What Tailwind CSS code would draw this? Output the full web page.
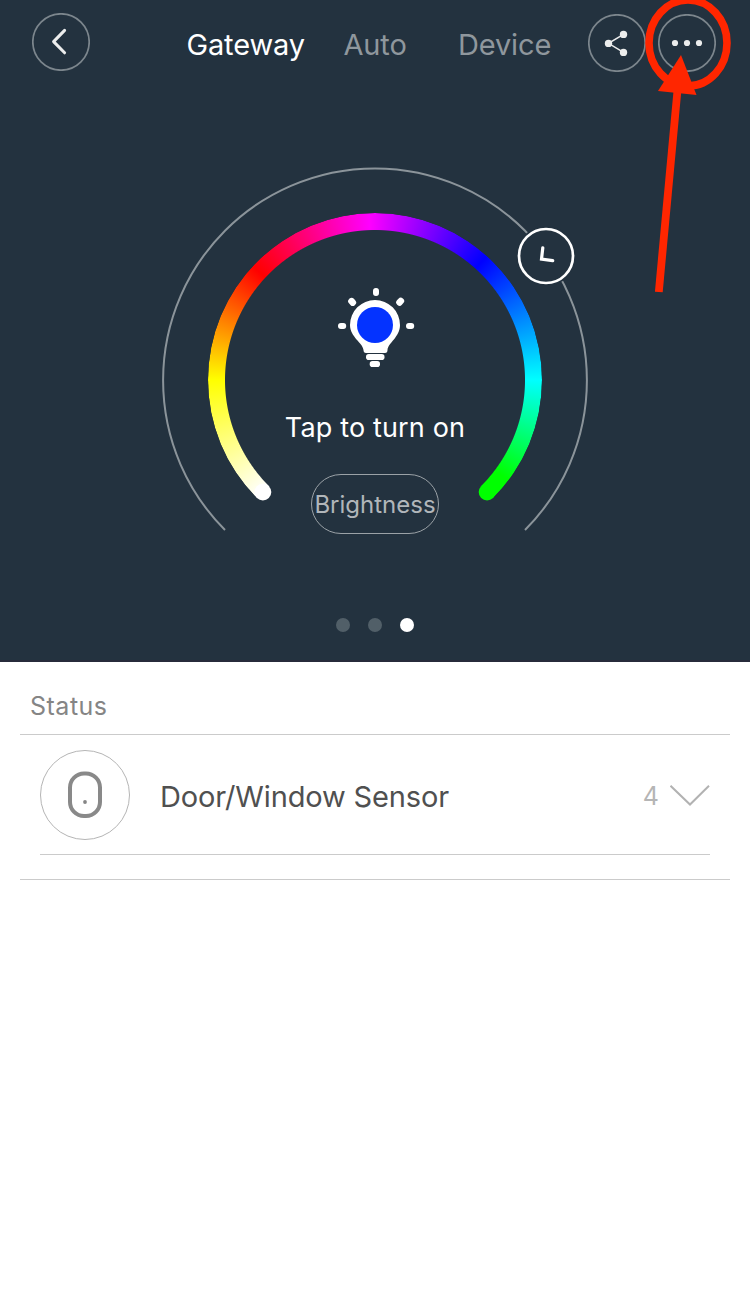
<!DOCTYPE html>
<html lang="en">
<head>
<meta charset="utf-8">
<title>Gateway</title>
<script src="https://cdn.jsdelivr.net/npm/@tailwindcss/browser@4"></script>
</head>
<body class="bg-white font-['Inter',sans-serif]">
<main class="relative flex h-[1294px] w-[750px] flex-col overflow-hidden bg-white">
  <section class="flex h-[662px] flex-col items-center border-b-2 border-[#272b3b] bg-[#23323f]">
    <header class="flex w-full items-start pt-[13px] pl-8">
      <button class="size-[58px] shrink-0" aria-label="Back">
        <svg class="block size-[58px]" viewBox="0 0 58 58" fill="none">
          <circle cx="29" cy="29" r="28.2" stroke="#7c868d" stroke-width="1.7"/>
          <path d="M32.6 17.4 21.6 28.6 32.6 39.8" stroke="#eceded" stroke-width="3" stroke-linecap="round" stroke-linejoin="round"/>
        </svg>
      </button>
      <nav class="flex pt-3 text-[29px] leading-10 tracking-[-0.150px] text-[#8f979d]">
        <a class="ml-[96.500px] w-[118px] whitespace-nowrap text-white">Gateway</a>
        <a class="ml-[39px] w-[64px] whitespace-nowrap">Auto</a>
        <a class="ml-[50.500px] w-[93px] whitespace-nowrap">Device</a>
      </nav>
      <button class="mt-px ml-[37px] size-[58px] shrink-0" aria-label="Share">
        <svg class="block size-[58px]" viewBox="0 0 58 58" fill="none">
          <circle cx="29" cy="29" r="28.2" stroke="#7c868d" stroke-width="1.7"/>
          <path d="M35.5 20.4 20.5 29.3 35.5 38.4" stroke="#eceded" stroke-width="1.5"/>
          <g fill="#eceded"><circle cx="35.5" cy="20.4" r="3.7"/><circle cx="20.5" cy="29.4" r="3.7"/><circle cx="35.5" cy="38.4" r="3.7"/></g>
        </svg>
      </button>
      <button class="mt-px ml-3 size-[58px] shrink-0" aria-label="More">
        <svg class="block size-[58px]" viewBox="0 0 58 58" fill="none">
          <circle cx="29" cy="29" r="28.2" stroke="#7c868d" stroke-width="1.7"/>
          <g fill="#eceded"><circle cx="17" cy="29" r="3.1"/><circle cx="29" cy="29" r="3.1"/><circle cx="41" cy="29" r="3.1"/></g>
        </svg>
      </button>
    </header>

    <div class="relative mt-[88px] flex h-[400px] w-[450px] flex-col items-center">
      <!-- colour ring -->
      <div class="absolute top-[53px] left-[58px] size-[334px] rounded-full bg-[conic-gradient(from_225deg,#fff_0deg,#ff0_45deg,#f00_88deg,#f0f_133deg,#00f_177deg,#0ff_225deg,#0f0_262deg,#0f0_270deg,transparent_270deg)] [mask-image:radial-gradient(circle,transparent_149.5px,#000_150.5px)]"></div>
      <svg class="absolute top-0 left-0 h-[400px] w-[450px]" viewBox="150 160 450 400" fill="none">
        <circle cx="262.900" cy="492.100" r="8.400" fill="#fff"/>
        <circle cx="487.100" cy="492.100" r="8.400" fill="#0f0"/>
        <path d="M225 530A211.900 211.900 0 1 1 525 530" stroke="#8b949a" stroke-width="2"/>
        <circle cx="546" cy="256" r="30" fill="#23323f"/>
        <circle cx="546" cy="256" r="27" stroke="#fff" stroke-width="2.700"/>
        <path d="M542.800 247.800 541.500 259.200 552.700 260.700" stroke="#fff" stroke-width="3.200" stroke-linecap="round"/>
      </svg>
      <svg class="relative mt-[120px] h-[100px] w-[110px] shrink-0" viewBox="320 280 110 100" fill="#fff">
        <path d="M350 325A25 25 0 0 1 400 325C400 337 388 343 387.500 350Q387.500 353 385 353H366Q363.500 353 363.500 350C363 343 350 337 350 325Z"/>
        <circle cx="375" cy="325" r="18" fill="#0433ff"/>
        <rect x="366" y="354" width="18.500" height="6" rx="2.800"/>
        <rect x="369.700" y="361" width="10.300" height="6" rx="2.800"/>
        <rect x="373" y="288" width="6" height="8" rx="2.900"/>
        <rect x="338" y="323" width="8.200" height="6" rx="2.900"/>
        <rect x="406" y="323" width="8.200" height="6" rx="2.900"/>
        <rect x="348" y="298.500" width="8.400" height="6.600" rx="3.100" transform="rotate(48 352.1 301.8)"/>
        <rect x="396" y="298.500" width="8.400" height="6.600" rx="3.100" transform="rotate(-48 400.1 301.8)"/>
      </svg>
      <p class="relative mt-[28px] text-[27px] leading-10 tracking-[0.150px] whitespace-nowrap text-white">Tap to turn on</p>
      <button class="relative mt-[26px] flex h-[60px] w-32 shrink-0 items-center justify-center rounded-full border border-[#9ba2a7] pt-0.5 text-[24px] whitespace-nowrap text-[#b1b6ba]">Brightness</button>
    </div>

    <div class="mt-[58px] flex gap-[18px]">
      <span class="size-3.5 rounded-full bg-[#515f68]"></span>
      <span class="size-3.5 rounded-full bg-[#515f68]"></span>
      <span class="size-3.5 rounded-full bg-white"></span>
    </div>
  </section>

  <section class="mx-5 h-[218px] border-b border-[#cbcbcb]">
    <h2 class="h-[73px] border-b border-[#cbcbcb] pt-6 pl-2.5 text-[25px] leading-10 tracking-[0.500px] text-[#858585]">Status</h2>
    <div class="mx-5 flex h-[120px] items-center border-b border-[#cbcbcb]">
      <svg class="size-[90px] shrink-0" viewBox="0 0 90 90" fill="none">
        <circle cx="45" cy="45" r="44.500" stroke="#b5b5b5"/>
        <rect x="30" y="23.500" width="30" height="42.500" rx="14" stroke="#898989" stroke-width="4"/>
        <circle cx="45" cy="52" r="1.900" fill="#858585"/>
      </svg>
      <span class="ml-[30px] pt-1 text-[29px] tracking-[-0.150px] whitespace-nowrap text-[#505050]">Door/Window Sensor</span>
      <span class="ml-auto pt-1 text-[25px] text-[#b5b5b5]">4</span>
      <svg class="ml-[11px] h-6 w-10" viewBox="1 0 40 24" fill="none"><path d="M1.500 2.800 21 21.500 40 2.800" stroke="#b2b2b2" stroke-width="2"/></svg>
    </div>
  </section>

  <!-- callout over the menu button -->
  <svg class="absolute top-0 left-[630px] h-[300px] w-[120px]" viewBox="630 0 120 300" fill="none">
    <ellipse cx="688" cy="43" rx="39" ry="43" stroke="#ff2600" stroke-width="7.600"/>
    <path d="M658.800 292 677.500 90" stroke="#ff2600" stroke-width="7.800"/>
    <path d="M681 55 696.500 95 658 91Z" fill="#ff2600"/>
  </svg>
</main>
</body>
</html>
